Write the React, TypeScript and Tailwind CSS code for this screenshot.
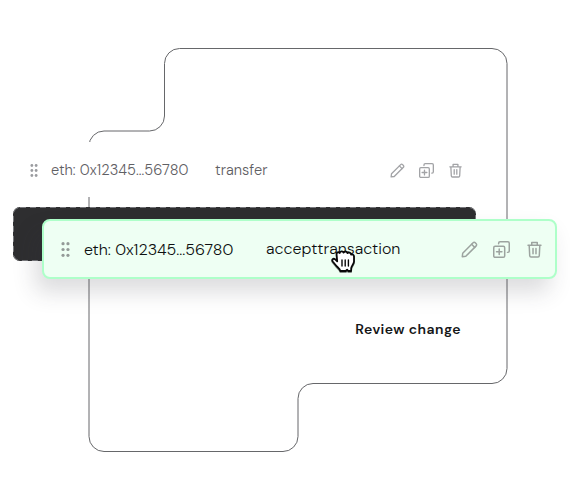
import React from "react";

const font = "font-['DM_Sans',Inter,'Liberation_Sans',sans-serif]";

function Dots({ className }: { className: string }) {
  return (
    <svg viewBox="0 0 8 14" className={className} fill="currentColor">
      {[1.6, 7, 12.4].map((y) => (
        <g key={y}>
          <circle cx="1.7" cy={y} r="1.5" />
          <circle cx="6.3" cy={y} r="1.5" />
        </g>
      ))}
    </svg>
  );
}

function Pencil({ className }: { className: string }) {
  return (
    <svg viewBox="0 0 16 16" className={className} fill="none" stroke="currentColor" strokeWidth="1.4" strokeLinejoin="round" strokeLinecap="round">
      <path d="M1.2 14.8l.4-3.300L11.400 1.700a1.400 1.400 0 0 1 2 0l.9.9a1.400 1.400 0 0 1 0 2L4.500 14.400z" />
      <path d="M10 3.100l2.900 2.900" />
    </svg>
  );
}

function Duplicate({ className }: { className: string }) {
  return (
    <svg viewBox="0 0 16 16" className={className} fill="none" stroke="currentColor" strokeWidth="1.4" strokeLinejoin="round" strokeLinecap="round">
      <rect x=".7" y="5" width="10.3" height="10.3" rx="1.3" />
      <path d="M5.300 2.700V2A1.300 1.300 0 0 1 6.600.7H14A1.300 1.300 0 0 1 15.300 2v7.400A1.300 1.300 0 0 1 14 10.700h-.4M5.850 7.600v5.100M3.300 10.150h5.100" />
    </svg>
  );
}

function Trash({ className }: { className: string }) {
  return (
    <svg viewBox="0 0 14 16" className={className} fill="none" stroke="currentColor" strokeWidth="1.4" strokeLinejoin="round" strokeLinecap="round">
      <path d="M.9 4h12.2M4.400 4V1.300h5.200V4M2 4l.5 9.900a1.200 1.200 0 0 0 1.200 1.100h6.600a1.200 1.200 0 0 0 1.200-1.100L12 4M5.600 7v5M8.400 7v5" />
    </svg>
  );
}

function Outline() {
  return (
    <svg className="pointer-events-none absolute inset-0 h-[500px] w-[570px]" viewBox="0 0 570 500" fill="none" stroke="#66676a">
      <path d="M89 146A15 15 0 0 1 104 131H149.500A15 15 0 0 0 164.500 116V63.500A15 15 0 0 1 179.500 48.500H492A15 15 0 0 1 507 63.500V368.500A15 15 0 0 1 492 383.500H313A15 15 0 0 0 298 398.500V436.500A15 15 0 0 1 283 451.500H104A15 15 0 0 1 89 436.500Z" />
    </svg>
  );
}

function GrabCursor() {
  return (
    <svg className="absolute left-[286px] top-[27px] h-[26px] w-[26px]" viewBox="0 0 26 26" fill="none" style={{ filter: "drop-shadow(0 1px .7px rgba(0,0,0,.45))" }}>
      <path d="M7.200 13.300 6.600 6.500C6.400 4.400 8.600 3.500 9.700 5.100 10 3 13 2.800 13.600 4.600 14.400 2.900 17 3.200 17.400 5.100 18.600 3.900 20.900 4.500 21.100 6.600 22.500 5.900 24 6.800 24 8.500V13.400C24 16 21.600 17.600 21.200 20.200L21.100 23H18.200L17.100 21.700 15.800 23H10.200C10 20.600 7.400 19.400 5.800 17.300L2.700 13.500C1.400 11.700 3.300 10 5 11.200Z" fill="#fff" stroke="#080808" strokeWidth="1.800" strokeLinejoin="round" />
      <path d="M12 12v6M15.200 12v6M18.400 12v6" stroke="#080808" strokeWidth="1.400" strokeLinecap="round" />
    </svg>
  );
}

export default function App() {
  return (
    <main className={`relative h-[500px] w-[570px] overflow-hidden bg-white ${font}`}>
      <Outline />
      <section className="relative ml-[13px] w-[463px] pt-[142px]">
        <div className="flex h-[55px] items-center bg-white pl-[17px] pt-[2px] text-[#5f6064]">
          <Dots className="h-[13px] w-2 text-[#9b9ca0]" />
          <span className="ml-[13px] w-[164px] whitespace-nowrap text-[14.6px] font-[340] tracking-[0.05px]">eth: 0x12345...56780</span>
          <span className="w-[175px] text-[14.6px] font-[340] tracking-[0.05px]">transfer</span>
          <div className="flex items-center text-[#a2a3a6]">
            <Pencil className="h-[15px] w-[15px]" />
            <Duplicate className="ml-[14px] h-[15px] w-[15px]" />
            <Trash className="ml-[15px] h-[15px] w-[13px]" />
          </div>
        </div>

        <div className="relative mt-[10px] h-[54px]">
          <div className="h-full rounded-[7px] bg-[#2e2e30]">
            <svg className="h-full w-full" viewBox="0 0 463 54" fill="none" stroke="#77787c">
              <rect x=".5" y=".5" width="462" height="53" rx="6.500" strokeDasharray="6 4" />
            </svg>
          </div>
          <div className="absolute left-[29px] top-3 flex h-[60px] w-[515px] items-center rounded-lg border-2 border-[#aeffc9] bg-[#eefff3] pl-[17px] text-[#0d0f10] shadow-[-7px_13px_22px_0px_rgba(45,48,58,0.17)]">
            <Dots className="h-[15px] w-[9px] text-[#939a97]" />
            <span className="ml-[14px] w-[182px] whitespace-nowrap pt-px text-[16px] font-[340] tracking-[-0.02px]">eth: 0x12345...56780</span>
            <span className="w-[195px] whitespace-nowrap text-[16px] font-[340] tracking-[0.02px]">accepttransaction</span>
            <div className="flex items-center text-[#9ca39f]">
              <Pencil className="h-[17px] w-[17px]" />
              <Duplicate className="ml-[15px] h-[17px] w-[17px]" />
              <Trash className="ml-[17px] h-[17px] w-[15px]" />
            </div>
            <GrabCursor />
          </div>
        </div>

        <div className="mt-[57px] flex justify-end pr-[15px]">
          <button className="whitespace-nowrap text-[14px] font-semibold leading-[22px] tracking-[0.45px] text-[#151617]">Review change</button>
        </div>
      </section>
    </main>
  );
}
